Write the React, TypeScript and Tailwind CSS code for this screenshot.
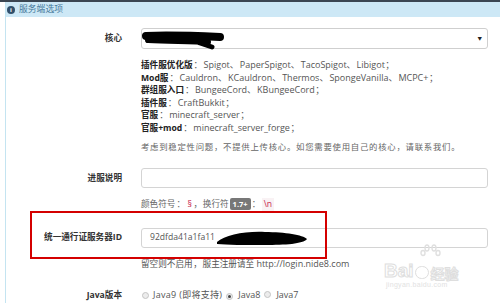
import React from "react";

function Radio({ checked }: { checked?: boolean }) {
  return (
    <span className="inline-flex w-[7px] h-[7px] rounded-full border border-[#c4c4c4] bg-[#ececec] items-center justify-center">
      {checked && <span className="w-[3px] h-[3px] rounded-full bg-[#444]" />}
    </span>
  );
}

function Dun() {
  return <span className="inline-block w-[10px] text-left">、</span>;
}
function Colon() {
  return <span className="inline-block w-[11px] text-center">：</span>;
}
function Semi() {
  return <span className="inline-block w-[10px] text-center">；</span>;
}

export default function App() {
  return (
    <div className="w-[500px] h-[303px] relative overflow-hidden bg-white font-['Open_Sans','Noto_Sans_CJK_SC',sans-serif] text-[8.6px] leading-[12.6px] text-[#555]">
      <div className="h-[2px] bg-[#3b4652]" />
      <div className="ml-[5px] border-l border-[#c4e4f1] h-full">
        <div className="h-[15px] bg-[#cde8f6] flex items-center gap-[4px] pl-[1px] text-[#46789a] text-[8.8px]">
          <span className="w-[8px] h-[8px] rounded-full bg-[#31506b] text-white text-[6px] font-bold leading-none flex items-center justify-center">i</span>
          <span>服务端选项</span>
        </div>

        <div className="pt-[11px]">
          {/* 核心 */}
          <div className="flex items-center">
            <div className="w-[116px] text-right font-bold text-[#333]">核心</div>
            <div className="ml-[19px] w-[347px] h-[21px] border border-[#cfcfcf] rounded-[3px] relative flex items-center justify-end pr-[5px]">
              <span className="text-[4.5px] text-[#222]">▼</span>
              <svg className="absolute left-0 top-0" width="100" height="24" viewBox="0 0 100 24">
                <path d="M4 7 C 25 6, 55 7, 78 8" stroke="#000" strokeWidth="8" strokeLinecap="round" fill="none" />
                <path d="M6 11 C 30 12, 50 12, 66 13" stroke="#000" strokeWidth="6" strokeLinecap="round" fill="none" />
                <path d="M58 14 L 70 18" stroke="#000" strokeWidth="5" strokeLinecap="round" fill="none" />
              </svg>
            </div>
          </div>

          {/* help list */}
          <div className="ml-[135px] mt-[10px] text-[9px]">
            <div><b className="text-[#222] text-[8.6px]">插件服优化版</b><Colon />Spigot<Dun />PaperSpigot<Dun />TacoSpigot<Dun />Libigot<Semi /></div>
            <div><b className="text-[#222] text-[8.6px]">Mod服</b><Colon />Cauldron<Dun />KCauldron<Dun />Thermos<Dun />SpongeVanilla<Dun />MCPC+<Semi /></div>
            <div><b className="text-[#222] text-[8.6px]">群组服入口</b><Colon />BungeeCord<Dun />KBungeeCord<Semi /></div>
            <div><b className="text-[#222] text-[8.6px]">插件服</b><Colon />CraftBukkit<Semi /></div>
            <div><b className="text-[#222] text-[8.6px]">官服</b><Colon />minecraft_server<Semi /></div>
            <div><b className="text-[#222] text-[8.6px]">官服+mod</b><Colon />minecraft_server_forge<Semi /></div>
            <div className="mt-[6px] text-[#666] text-[8.4px] tracking-[0.75px]">考虑到稳定性问题，不提供上传核心。如您需要使用自己的核心，请联系我们。</div>
          </div>

          {/* 进服说明 */}
          <div className="flex items-center mt-[15px]">
            <div className="w-[116px] text-right font-bold text-[#333]">进服说明</div>
            <div className="ml-[19px] w-[347px] h-[20px] border border-[#d4d4d4] rounded-[3px]" />
          </div>
          <div className="ml-[135px] mt-[10px] flex items-center text-[#666]">
            <span>颜色符号</span>
            <Colon />
            <span className="text-[#c7254e] px-[1px]">§</span>
            <span className="inline-block w-[10px] text-center">，</span>
            <span>换行符</span>
            <span className="ml-[1px] bg-[#777] text-white font-bold text-[7.5px] leading-[12px] px-[3px] rounded-[2px]">1.7+</span>
            <Colon />
            <span className="text-[#c7254e] bg-[#f9f2f4] px-[2px]">\n</span>
          </div>

          {/* 统一通行证 */}
          <div className="flex items-center mt-[17px]">
            <div className="w-[116px] text-right font-bold text-[#333]">统一通行证服务器ID</div>
            <div className="ml-[19px] w-[347px] h-[20px] border border-[#d4d4d4] rounded-[3px] flex items-center pl-[8px] relative">
              <span className="text-[#555]">92dfda41a1fa11</span>
              <svg className="absolute left-[73px] top-0" width="100" height="20" viewBox="0 0 100 20">
                <path d="M2 13 C 10 6, 30 2, 50 3 C 70 3, 88 6, 92 10 C 88 15, 70 16, 50 16 C 30 16, 12 16, 2 15 Z" fill="#000" />
              </svg>
            </div>
          </div>
          <div className="ml-[135px] mt-[10px] text-[#555]">留空则不启用<span className="inline-block w-[10px] text-center">，</span>服主注册请至 <span className="text-[9px]">http://login.nide8.com</span></div>

          {/* Java */}
          <div className="flex items-center mt-[19px]">
            <div className="w-[116px] text-right font-bold text-[#333]">Java版本</div>
            <div className="ml-[20px] flex items-center text-[#555] text-[9px]">
              <Radio />
              <span className="ml-[4px] tracking-[0.3px]">Java9 (即将支持)</span>
              <span className="ml-[4px]"><Radio checked /></span>
              <span className="ml-[5px]">Java8</span>
              <span className="ml-[4px]"><Radio /></span>
              <span className="ml-[5px]">Java7</span>
            </div>
          </div>
        </div>
      </div>

      {/* red annotation box */}
      <div className="absolute left-[30px] top-[211px] w-[297px] h-[48px] border-2 border-[#d40000]" />

      {/* Baidu watermark */}
      <div className="absolute left-[384px] top-[244px] w-[90px] h-[50px] pointer-events-none">
        <svg className="absolute left-[36px] top-0" width="22" height="20" viewBox="0 0 22 20">
          <g fill="none" stroke="#e0e0e0" strokeWidth="1.4">
            <ellipse cx="7" cy="4" rx="2" ry="3" />
            <ellipse cx="14" cy="4" rx="2" ry="3" />
            <ellipse cx="3" cy="9" rx="2" ry="2.5" />
            <ellipse cx="18" cy="9" rx="2" ry="2.5" />
          </g>
        </svg>
        <div className="absolute left-0 top-[17px] flex items-end">
          <span className="font-['Liberation_Sans',sans-serif] text-[19px] leading-none font-bold text-white [-webkit-text-stroke:1px_#dedede]">Bai</span>
          <span className="ml-[1px] w-[14px] h-[13px] rounded-full border-[1.5px] border-[#dedede] mb-[1px]" />
          <span className="ml-[2px] text-[14px] leading-none font-bold text-white [-webkit-text-stroke:1px_#dedede] font-['Noto_Sans_CJK_SC',sans-serif]">经验</span>
        </div>
        <div className="absolute left-[2px] top-[37px] text-[7px] leading-none text-[#e2e2e2] font-['Liberation_Sans',sans-serif] tracking-[0.3px]">jingyan.baidu.com</div>
      </div>
    </div>
  );
}
